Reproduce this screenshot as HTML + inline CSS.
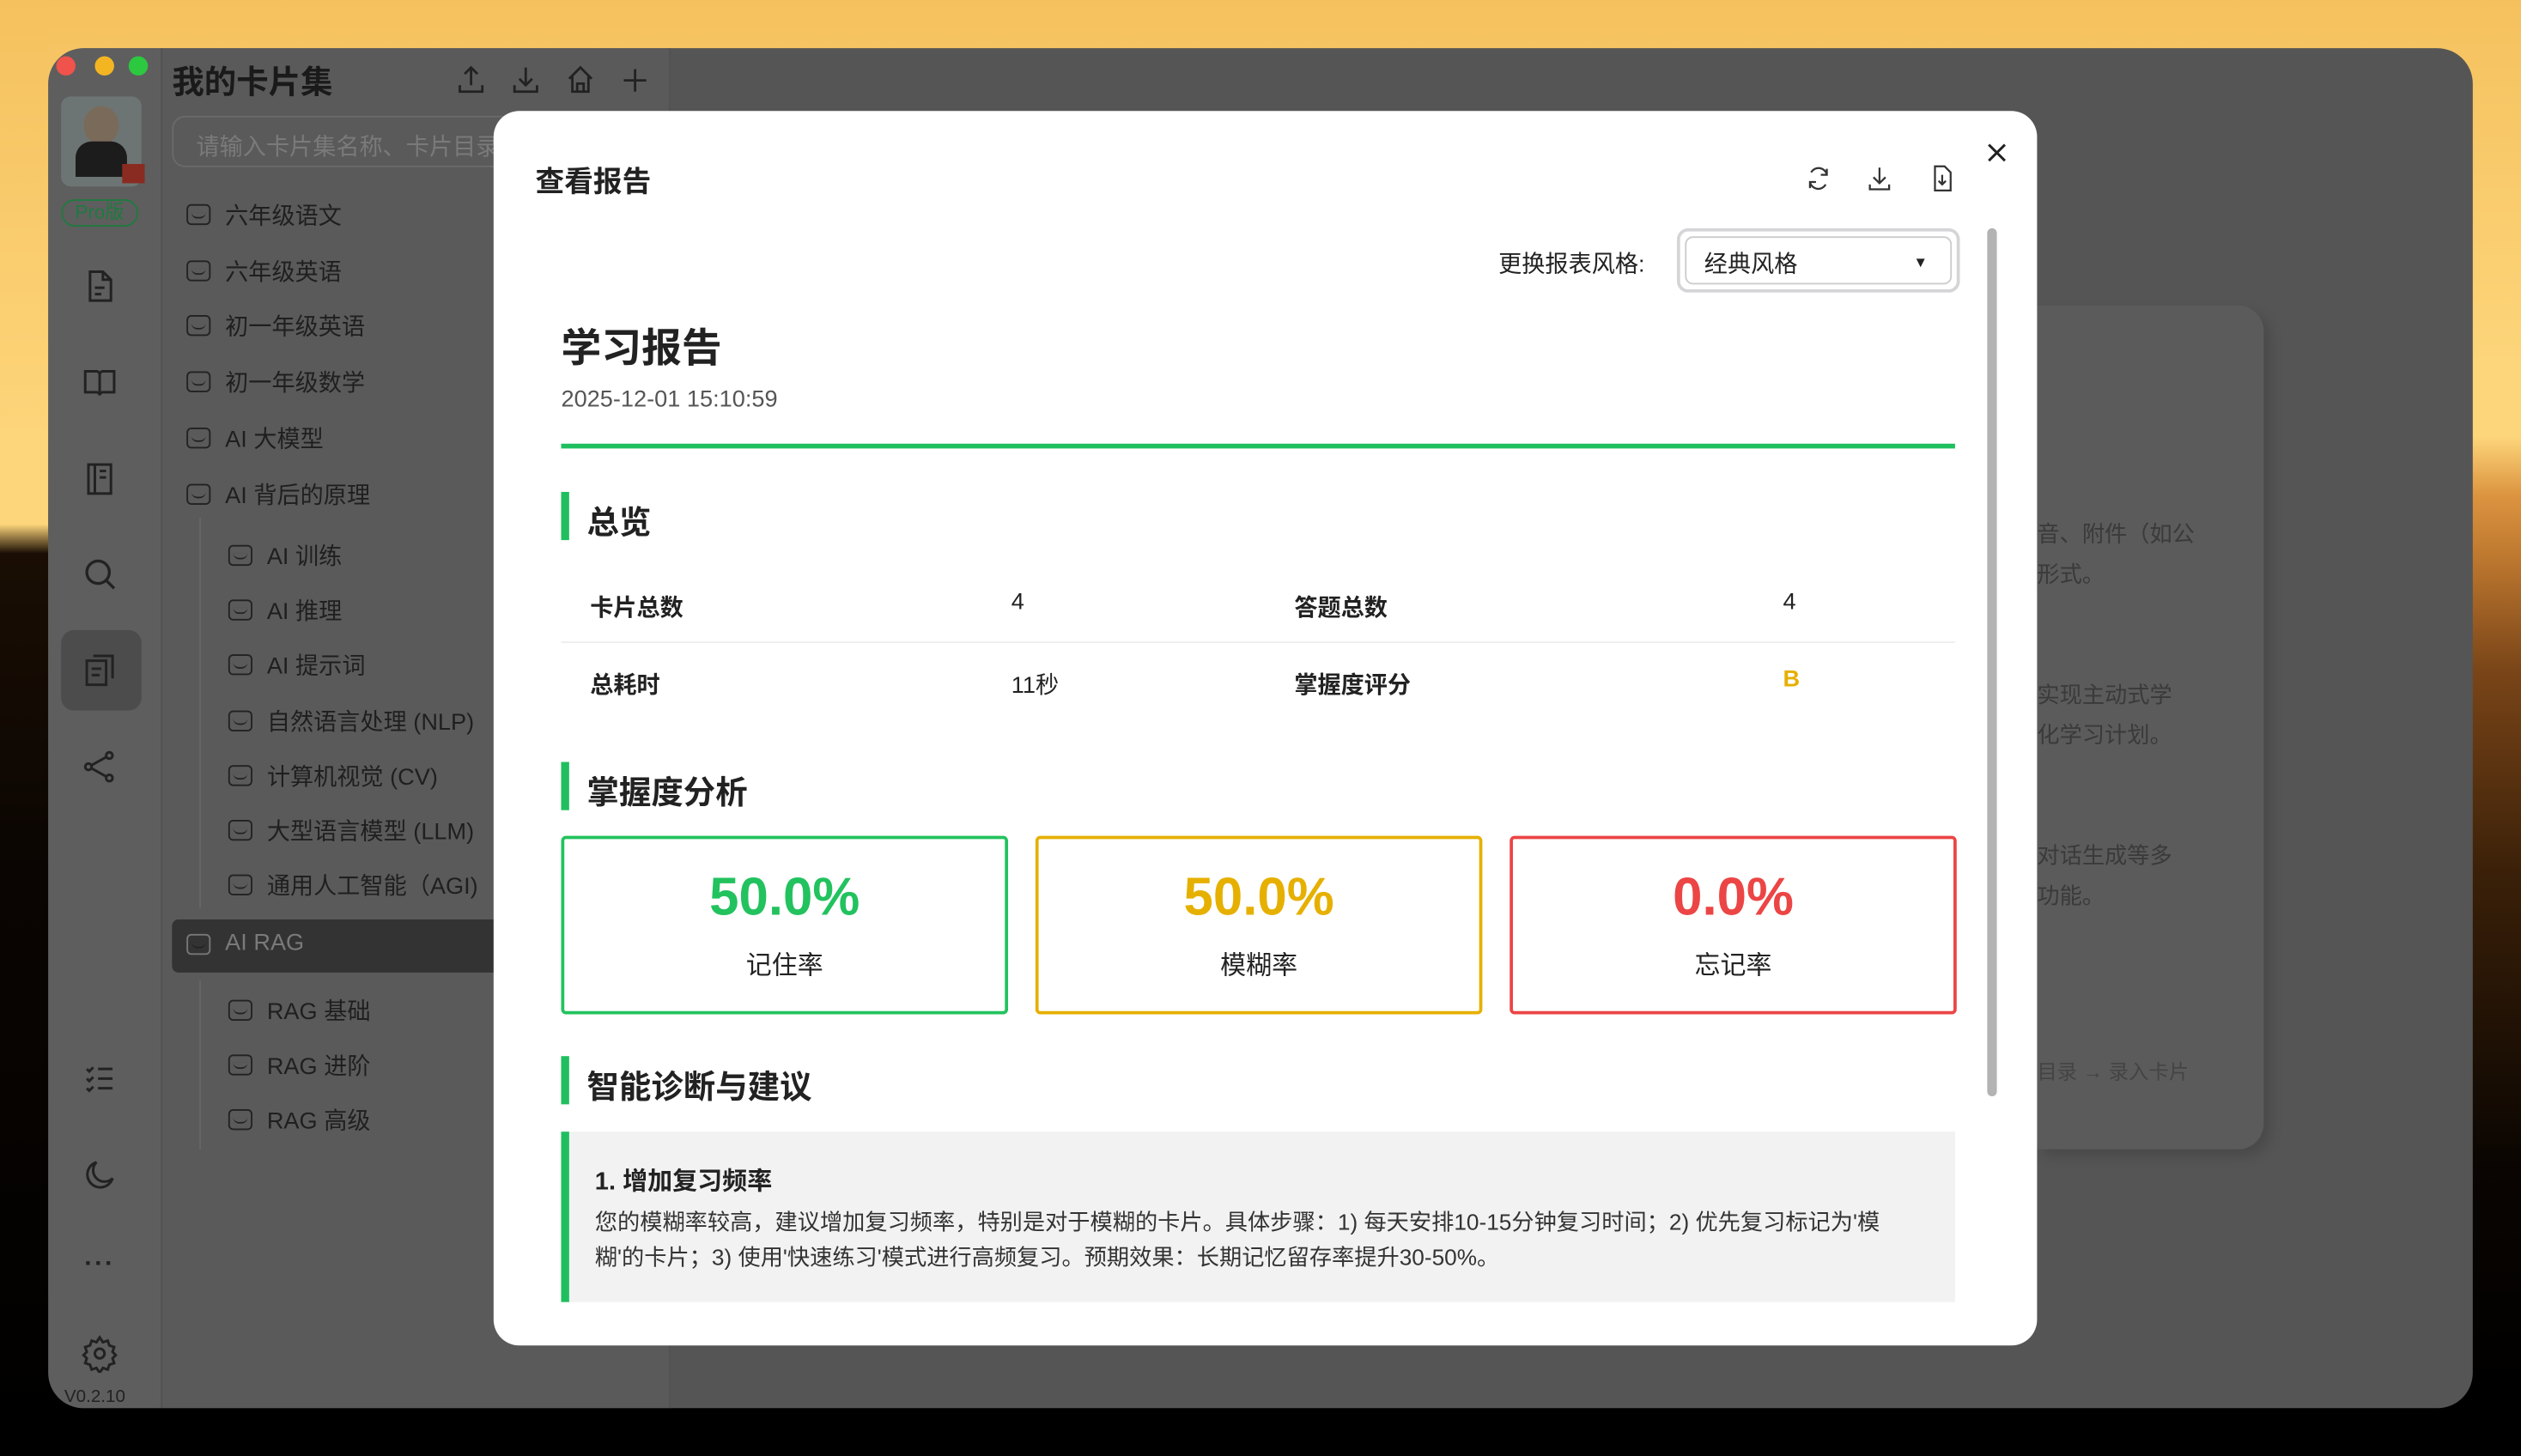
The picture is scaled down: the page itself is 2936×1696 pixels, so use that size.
<!DOCTYPE html>
<html><head><meta charset="utf-8"><style>
*{margin:0;padding:0;box-sizing:border-box}
html,body{width:2936px;height:1696px;overflow:hidden;background:#000}
#s{position:absolute;left:0;top:0;width:1568px;height:906px;transform:scale(1.87245);transform-origin:0 0;font-family:"Liberation Sans","Noto Sans CJK SC",sans-serif;background:linear-gradient(180deg,#f5c15e 0%,#fdd57a 25%,#fdd57a 30%,#dc9440 34%,#c07a30 38%,#7a4518 46%,#3a2008 60%,#0a0502 80%,#000 96%)}
.a{position:absolute}
.win{left:30px;top:30px;width:1508px;height:846px;border-radius:22px;background:#555;overflow:hidden}
.rail{left:0;top:0;width:70px;height:846px;background:#5e5e5e}
.list{left:70px;top:0;width:317px;height:846px;background:#5a5a5a;border-left:1px solid #525252;border-right:1px solid #525252}
.it{position:absolute;font-size:14.5px;color:#1f1f1f;display:flex;align-items:center;gap:9px}
.ic{width:15px;height:13px;border:1.6px solid #222;border-radius:3px;position:relative}
.ic:after{content:"";position:absolute;left:2px;right:2px;top:4px;height:3px;border-bottom:1.4px solid #222;border-radius:0 0 4px 4px}
.ri{position:absolute;left:20px;width:24px;height:24px}
.modal{left:307px;top:69px;width:960px;height:768px;background:#fff;border-radius:16px}
.h2{position:absolute;left:42px;font-size:20px;font-weight:bold;color:#222;padding-left:16px}
.h2:before{content:"";position:absolute;left:0;top:-3px;width:5px;height:30px;background:#1fbf5f}
.box{position:absolute;top:451px;width:278px;height:111px;border:2.5px solid;border-radius:3px;text-align:center}
.box b{display:block;font-size:33px;margin-top:17px}
.box span{display:block;font-size:16px;color:#222;margin-top:10px}
.t{position:absolute;font-size:14.5px;color:#222}
</style></head><body><div id="s">
<div class="a" style="left:0;top:0;width:30px;height:906px;background:linear-gradient(180deg,#f5c15e 0%,#fdd57a 30%,#fdd57a 36%,#1a0e04 38%,#0a0502 60%,#000 100%)"></div>
<div class="a win">
 <div class="a rail">
  <div class="a" style="left:5px;top:5px;width:12px;height:12px;border-radius:50%;background:#f0524c"></div>
  <div class="a" style="left:29px;top:5px;width:12px;height:12px;border-radius:50%;background:#f4b523"></div>
  <div class="a" style="left:50px;top:5px;width:12px;height:12px;border-radius:50%;background:#2cc840"></div>
  <div class="a" style="left:8px;top:30px;width:50px;height:56px;border-radius:6px;background:#6d7574"></div>
  <div class="a" style="left:22px;top:36px;width:22px;height:24px;border-radius:50%;background:#7a6a5a"></div>
  <div class="a" style="left:17px;top:58px;width:32px;height:22px;border-radius:10px 10px 0 0;background:#1c1c1c"></div>
  <div class="a" style="left:46px;top:72px;width:14px;height:12px;background:#8a2b22"></div>
  <div class="a" style="left:8px;top:94px;width:48px;height:17px;border:1.5px solid #1f7a3f;border-radius:9px;color:#1f7a3f;font-size:12px;text-align:center;line-height:14px">Pro版</div>
  <svg class="ri" style="top:136px" viewBox="0 0 24 24" fill="none" stroke="#222" stroke-width="1.6"><path d="M6 3h8l5 5v13H6z M14 3v5h5 M9 13h6 M9 17h4"/></svg>
  <svg class="ri" style="top:196px" viewBox="0 0 24 24" fill="none" stroke="#222" stroke-width="1.6"><path d="M3 5h7a2 2 0 012 2v13a2 2 0 00-2-2H3z M21 5h-7a2 2 0 00-2 2v13a2 2 0 012-2h7z"/></svg>
  <svg class="ri" style="top:256px" viewBox="0 0 24 24" fill="none" stroke="#222" stroke-width="1.6"><path d="M5 3h14v18H5z M9 3v18 M12 7h4 M12 11h4"/></svg>
  <svg class="ri" style="top:315px" viewBox="0 0 24 24" fill="none" stroke="#222" stroke-width="1.8"><circle cx="11" cy="11" r="7"/><path d="M16 16l5 5"/></svg>
  <div class="a" style="left:8px;top:362px;width:50px;height:50px;border-radius:8px;background:#4c4c4c"></div>
  <svg class="ri" style="top:375px" viewBox="0 0 24 24" fill="none" stroke="#222" stroke-width="1.6"><path d="M4 6h12v15H4z M8 3h12v14 M7 11h6 M7 15h5"/></svg>
  <svg class="ri" style="top:435px" viewBox="0 0 24 24" fill="none" stroke="#222" stroke-width="1.6"><circle cx="18" cy="5" r="2"/><circle cx="5" cy="12" r="2"/><circle cx="18" cy="19" r="2"/><path d="M7 11l9-5 M7 13l9 5"/></svg>
  <svg class="ri" style="top:629px" viewBox="0 0 24 24" fill="none" stroke="#222" stroke-width="1.6"><path d="M4 6l1.5 1.5L8 5 M4 12l1.5 1.5L8 11 M4 18l1.5 1.5L8 17 M11 6h9 M11 12h9 M11 18h9"/></svg>
  <svg class="ri" style="top:689px" viewBox="0 0 24 24" fill="none" stroke="#222" stroke-width="1.6"><path d="M20 14A8 8 0 1110 4a6 6 0 0010 10z"/></svg>
  <div class="a" style="left:20px;top:748px;width:24px;text-align:center;font-size:16px;color:#222;font-weight:bold;letter-spacing:1px">···</div>
  <svg class="ri" style="top:800px" viewBox="0 0 24 24" fill="none" stroke="#222" stroke-width="1.6"><circle cx="12" cy="12" r="3"/><path d="M12 2l2 3 3-1 1 3 3 1-1 3 2 2-2 2 1 3-3 1-1 3-3-1-2 3-2-3-3 1-1-3-3-1 1-3-2-2 2-2-1-3 3-1 1-3 3 1z"/></svg>
  <div class="a" style="left:10px;top:833px;font-size:11px;color:#222">V0.2.10</div>
 </div>
 <div class="a list">
  <div class="a" style="left:6px;top:5px;font-size:20px;font-weight:bold;color:#1a1a1a">我的卡片集</div>
  <svg class="a" style="left:184px;top:10px" width="120" height="18" viewBox="0 0 120 18" fill="none" stroke="#222" stroke-width="1.5"><path d="M8 2v11 M4 6l4-4 4 4 M1 13v4h14v-4 M42 2v11 M38 9l4 4 4-4 M35 13v4h14v-4 M69 9l7-7 7 7 M71 7v10h10V7 M74 17v-5h4v5 M110 3v14 M103 10h14"/></svg>
  <div class="a" style="left:6px;top:42px;width:320px;height:32px;border:1px solid #6a6a6a;border-radius:8px;font-size:14.5px;color:#7a7a7a;padding:7px 0 0 14px;white-space:nowrap">请输入卡片集名称、卡片目录</div>
  <div class="a" style="left:23px;top:292px;width:1px;height:243px;background:#666"></div>
  <div class="a" style="left:23px;top:580px;width:1px;height:105px;background:#666"></div>
  <div class="a" style="left:6px;top:542px;width:240px;height:33px;background:#333;border-radius:4px"></div>
 </div>
 <div class="a" style="left:1237px;top:160px;width:141px;height:525px;background:#5b5b5b;border-radius:0 16px 16px 0;box-shadow:4px 4px 8px rgba(0,0,0,.15)"></div>
 <div class="a" style="left:1237px;top:290px;font-size:14px;color:#3a3a3a;line-height:25px;white-space:nowrap">音、附件（如公<br>形式。<br><br><br>实现主动式学<br>化学习计划。<br><br><br>对话生成等多<br>功能。</div>
 <div class="a" style="left:1237px;top:626px;font-size:12.5px;color:#444">目录 → 录入卡片</div>
</div>
<div class="it" style="left:116px;top:123px"><i class="ic"></i>六年级语文</div>
<div class="it" style="left:116px;top:158px"><i class="ic"></i>六年级英语</div>
<div class="it" style="left:116px;top:192px"><i class="ic"></i>初一年级英语</div>
<div class="it" style="left:116px;top:227px"><i class="ic"></i>初一年级数学</div>
<div class="it" style="left:116px;top:262px"><i class="ic"></i>AI 大模型</div>
<div class="it" style="left:116px;top:297px"><i class="ic"></i>AI 背后的原理</div>
<div class="it" style="left:142px;top:335px"><i class="ic"></i>AI 训练</div>
<div class="it" style="left:142px;top:369px"><i class="ic"></i>AI 推理</div>
<div class="it" style="left:142px;top:403px"><i class="ic"></i>AI 提示词</div>
<div class="it" style="left:142px;top:438px"><i class="ic"></i>自然语言处理 (NLP)</div>
<div class="it" style="left:142px;top:472px"><i class="ic"></i>计算机视觉 (CV)</div>
<div class="it" style="left:142px;top:506px"><i class="ic"></i>大型语言模型 (LLM)</div>
<div class="it" style="left:142px;top:540px"><i class="ic"></i>通用人工智能（AGI)</div>
<div class="it" style="left:116px;top:579px;color:#7a7a7a"><i class="ic" style="border-color:#777"></i>AI RAG</div>
<div class="it" style="left:142px;top:618px"><i class="ic"></i>RAG 基础</div>
<div class="it" style="left:142px;top:652px"><i class="ic"></i>RAG 进阶</div>
<div class="it" style="left:142px;top:686px"><i class="ic"></i>RAG 高级</div>

<div class="a modal">
 <div class="a" style="left:26px;top:30px;font-size:18px;font-weight:bold;color:#222">查看报告</div>
 <svg class="a" style="left:815px;top:33px" width="18" height="18" viewBox="0 0 24 24" fill="none" stroke="#333" stroke-width="1.6"><path d="M19 9a7 7 0 00-13-2 M5 15a7 7 0 0013 2 M19 4v5h-5 M5 20v-5h5"/></svg>
 <svg class="a" style="left:853px;top:33px" width="18" height="18" viewBox="0 0 24 24" fill="none" stroke="#333" stroke-width="1.6"><path d="M12 3v13 M7 11l5 5 5-5 M4 17v4h16v-4"/></svg>
 <svg class="a" style="left:892px;top:33px" width="18" height="18" viewBox="0 0 24 24" fill="none" stroke="#333" stroke-width="1.6"><path d="M6 2h8l5 5v15H6z M12 9v8 M9 14l3 3 3-3"/></svg>
 <svg class="a" style="left:927px;top:18px" width="16" height="16" viewBox="0 0 16 16" stroke="#222" stroke-width="1.6"><path d="M3 3l10 10M13 3L3 13"/></svg>
 <div class="a" style="left:929px;top:73px;width:6px;height:540px;border-radius:3px;background:#b3b3b3"></div>
 <div class="a" style="left:625px;top:84px;font-size:14.5px;color:#222">更换报表风格:</div>
 <div class="a" style="left:736px;top:73px;width:176px;height:40px;border:2px solid #d5d5d8;border-radius:7px;padding:3px"><div style="border:1px solid #ccc;border-radius:5px;height:30px;font-size:14.5px;color:#222;padding:5px 0 0 11px">经典风格<span style="position:absolute;right:18px;top:14px;font-size:9px">▼</span></div></div>
 <div class="a" style="left:42px;top:128px;font-size:25px;font-weight:bold;color:#222">学习报告</div>
 <div class="a" style="left:42px;top:172px;font-size:14.5px;color:#555">2025-12-01 15:10:59</div>
 <div class="a" style="left:42px;top:207px;width:867px;height:3px;background:#1fbf5f"></div>
 <div class="h2" style="top:240px">总览</div>
 <div class="t" style="left:60px;top:298px;font-weight:bold">卡片总数</div>
 <div class="t" style="left:322px;top:298px">4</div>
 <div class="t" style="left:498px;top:298px;font-weight:bold">答题总数</div>
 <div class="t" style="left:802px;top:298px">4</div>
 <div class="a" style="left:42px;top:330px;width:867px;height:1px;background:#eee"></div>
 <div class="t" style="left:60px;top:346px;font-weight:bold">总耗时</div>
 <div class="t" style="left:322px;top:346px">11秒</div>
 <div class="t" style="left:498px;top:346px;font-weight:bold">掌握度评分</div>
 <div class="t" style="left:802px;top:346px;font-weight:bold;color:#e6b000">B</div>
 <div class="h2" style="top:408px">掌握度分析</div>
 <div class="box" style="left:42px;border-color:#22c25e"><b style="color:#22c25e">50.0%</b><span>记住率</span></div>
 <div class="box" style="left:337px;border-color:#e6b000"><b style="color:#e6b000">50.0%</b><span>模糊率</span></div>
 <div class="box" style="left:632px;border-color:#ec4545"><b style="color:#ec4545">0.0%</b><span>忘记率</span></div>
 <div class="h2" style="top:591px">智能诊断与建议</div>
 <div class="a" style="left:42px;top:635px;width:867px;height:106px;background:#f2f2f2;border-left:5px solid #1fbf5f;padding:19px 20px 0 16px">
  <div style="font-size:15.5px;font-weight:bold;color:#222">1. 增加复习频率</div>
  <div style="font-size:14px;color:#333;line-height:22px;margin-top:4px">您的模糊率较高，建议增加复习频率，特别是对于模糊的卡片。具体步骤：1) 每天安排10-15分钟复习时间；2) 优先复习标记为'模糊'的卡片；3) 使用'快速练习'模式进行高频复习。预期效果：长期记忆留存率提升30-50%。</div>
 </div>
</div>
</div></body></html>
